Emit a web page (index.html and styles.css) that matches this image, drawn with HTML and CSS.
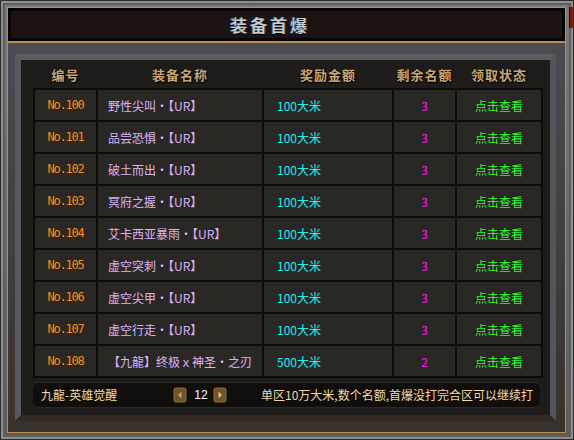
FILE: index.html
```html
<!DOCTYPE html>
<html lang="zh-CN">
<head>
    <meta charset="UTF-8">
    <meta name="viewport" content="width=device-width, initial-scale=1.0">
    <title>装备首爆</title>
    <link rel="stylesheet" href="styles.css">
</head>
<body>

    <div class="window">
        <div class="side-tab"></div>
        <div class="frame">
            <div class="titlebar">
                <h1 class="title">装备首爆</h1>
            </div>
            <div class="stage">
                <div class="panel">
                    <div class="panel-inner">
                        <div class="head">
                            <span>编号</span>
                            <span>装备名称</span>
                            <span>奖励金额</span>
                            <span>剩余名额</span>
                            <span>领取状态</span>
                        </div>

                        <div class="list">
                            <div class="row">
                                <span class="cell no">No.100</span>
                                <span class="cell name">野性尖叫・【UR】</span>
                                <span class="cell amount">100大米</span>
                                <span class="cell left">3</span>
                                <span class="cell status">点击查看</span>
                            </div>
                            <div class="row">
                                <span class="cell no">No.101</span>
                                <span class="cell name">品尝恐惧・【UR】</span>
                                <span class="cell amount">100大米</span>
                                <span class="cell left">3</span>
                                <span class="cell status">点击查看</span>
                            </div>
                            <div class="row">
                                <span class="cell no">No.102</span>
                                <span class="cell name">破土而出・【UR】</span>
                                <span class="cell amount">100大米</span>
                                <span class="cell left">3</span>
                                <span class="cell status">点击查看</span>
                            </div>
                            <div class="row">
                                <span class="cell no">No.103</span>
                                <span class="cell name">冥府之握・【UR】</span>
                                <span class="cell amount">100大米</span>
                                <span class="cell left">3</span>
                                <span class="cell status">点击查看</span>
                            </div>
                            <div class="row">
                                <span class="cell no">No.104</span>
                                <span class="cell name">艾卡西亚暴雨・【UR】</span>
                                <span class="cell amount">100大米</span>
                                <span class="cell left">3</span>
                                <span class="cell status">点击查看</span>
                            </div>
                            <div class="row">
                                <span class="cell no">No.105</span>
                                <span class="cell name">虚空突刺・【UR】</span>
                                <span class="cell amount">100大米</span>
                                <span class="cell left">3</span>
                                <span class="cell status">点击查看</span>
                            </div>
                            <div class="row">
                                <span class="cell no">No.106</span>
                                <span class="cell name">虚空尖甲・【UR】</span>
                                <span class="cell amount">100大米</span>
                                <span class="cell left">3</span>
                                <span class="cell status">点击查看</span>
                            </div>
                            <div class="row">
                                <span class="cell no">No.107</span>
                                <span class="cell name">虚空行走・【UR】</span>
                                <span class="cell amount">100大米</span>
                                <span class="cell left">3</span>
                                <span class="cell status">点击查看</span>
                            </div>
                            <div class="row">
                                <span class="cell no">No.108</span>
                                <span class="cell name">【九龍】终极ｘ神圣・之刃</span>
                                <span class="cell amount">500大米</span>
                                <span class="cell left">2</span>
                                <span class="cell status">点击查看</span>
                            </div>
                        </div>

                        <div class="footer">
                            <span class="server">九龍-英雄觉醒</span>
                            <div class="pager">
                                <svg class="page-btn" width="16" height="18" viewBox="0 0 16 18">
                                    <rect x="0.5" y="0.5" width="15" height="17" rx="3" fill="#2a2114" stroke="#0e0a05"/>
                                    <rect x="2" y="2" width="12" height="14" rx="2" fill="#6e5529" stroke="#8f7340" stroke-width="0.8"/>
                                    <path d="M9.5 5.5 L6 9 L9.5 12.5 Z" fill="#b9a06e"/>
                                </svg>
                                <span class="page-num">12</span>
                                <svg class="page-btn" width="16" height="18" viewBox="0 0 16 18">
                                    <rect x="0.5" y="0.5" width="15" height="17" rx="3" fill="#2a2114" stroke="#0e0a05"/>
                                    <rect x="2" y="2" width="12" height="14" rx="2" fill="#6e5529" stroke="#8f7340" stroke-width="0.8"/>
                                    <path d="M6.5 5.5 L10 9 L6.5 12.5 Z" fill="#d8c190"/>
                                </svg>
                            </div>
                            <span class="note">单区10万大米,数个名额,首爆没打完合区可以继续打</span>
                        </div>
                    </div>
                </div>
            </div>
        </div>
    </div>

</body>
</html>
```

FILE: styles.css
```css
/* Global Styles */
* {
    margin: 0;
    padding: 0;
    box-sizing: border-box;
}

body {
    font-family: "Noto Sans CJK SC", "Liberation Sans", sans-serif;
    background-color: #2a2a2a;
    width: 574px;
    height: 440px;
    overflow: hidden;
}

/* Outer grey window */
.window {
    position: relative;
    width: 574px;
    height: 440px;
    padding: 7px 8px 7px 7px;
    background: linear-gradient(#7a7a7a, #5c5c5c);
    box-shadow: inset 0 0 0 1px #2c2c2c, inset 0 0 0 3px #8e8e8e, inset 0 0 0 5px #5e5e5e;
}

.side-tab {
    position: absolute;
    top: 7px;
    right: 0;
    width: 5px;
    height: 21px;
    background: #7c1c12;
    border-left: 1px solid #2a0a06;
}

.frame {
    width: 559px;
    height: 426px;
    border: 1px solid #b88f4e;
    display: flex;
    flex-direction: column;
}

/* Title Bar */
.titlebar {
    height: 33px;
    background: #1c1313;
    box-shadow: inset 0 0 0 3px #070505;
    display: flex;
    align-items: center;
    justify-content: center;
    padding-right: 33px;
    border-bottom: 2px solid #b88f4e;
    flex: none;
    box-sizing: content-box;
}

.title {
    font-size: 17px;
    font-weight: 500;
    letter-spacing: 3px;
    color: #c4d0dc;
    text-shadow: -1px 0 0 #34507e, 1px 0 0 #6a4a2a, 0 1px 1px #000;
}

/* Stone area */
.stage {
    flex: 1;
    padding: 11px 9px 11px 7px;
    background: linear-gradient(#4a4c52, #403e3e 55%, #3a322c);
}

.panel {
    height: 100%;
    border: 6px solid;
    border-color: #5b5d63 #53555a #2f2a25 #57595e;
    box-shadow: inset 0 0 0 1px #141312;
}

.panel-inner {
    height: 100%;
    padding: 2px 6px 0 12px;
    background: #1e1d1b;
}

/* Table header */
.head {
    display: grid;
    grid-template-columns: 61px 164px 128px 61px 84px;
    column-gap: 2px;
    padding: 0 2px;
    height: 26px;
    align-items: center;
    width: 510px;
}

.head span {
    text-align: center;
    white-space: nowrap;
    font-size: 13px;
    line-height: 16px;
    font-weight: bold;
    letter-spacing: 1px;
    color: #c7a674;
    text-shadow: 1px 1px 1px #000, 0 0 2px #000;
}

/* Rows */
.list {
    display: grid;
    row-gap: 2px;
    padding: 2px;
    background: #0d0c0b;
    width: 510px;
}

.row {
    display: grid;
    grid-template-columns: 61px 164px 128px 61px 84px;
    column-gap: 2px;
    height: 30px;
}

.cell {
    background: #2a2825;
    display: flex;
    align-items: center;
    font-size: 12px;
    white-space: nowrap;
}

.no {
    justify-content: center;
    font-family: "DejaVu Sans Mono", monospace;
    font-size: 12px;
    letter-spacing: -1.2px;
    color: #ff8a1c;
}

.name {
    padding-left: 10px;
    color: #dab4f6;
}

.amount {
    padding-left: 13px;
    color: #1ff0f4;
}

.left {
    justify-content: center;
    color: #ff18ff;
}

.status {
    justify-content: center;
    color: #2cf82c;
}

/* Footer bar */
.footer {
    margin-top: 4px;
    margin-right: 4px;
    height: 25px;
    display: flex;
    align-items: center;
    padding: 0 7px 0 8px;
    background: #110f0e;
    border-radius: 5px;
    box-shadow: inset 0 1px 0 #2e2b28, 0 1px 0 #2a2724;
    font-size: 12px;
    color: #f3d7a6;
}

.server {
    width: 131px;
}

.pager {
    display: flex;
    align-items: center;
}

.page-btn {
    display: block;
}

.page-num {
    width: 24px;
    text-align: center;
    color: #ffffff;
    font-family: "Liberation Sans", sans-serif;
    font-size: 12px;
    padding-left: 2px;
}

.note {
    margin-left: auto;
    white-space: nowrap;
}
```
